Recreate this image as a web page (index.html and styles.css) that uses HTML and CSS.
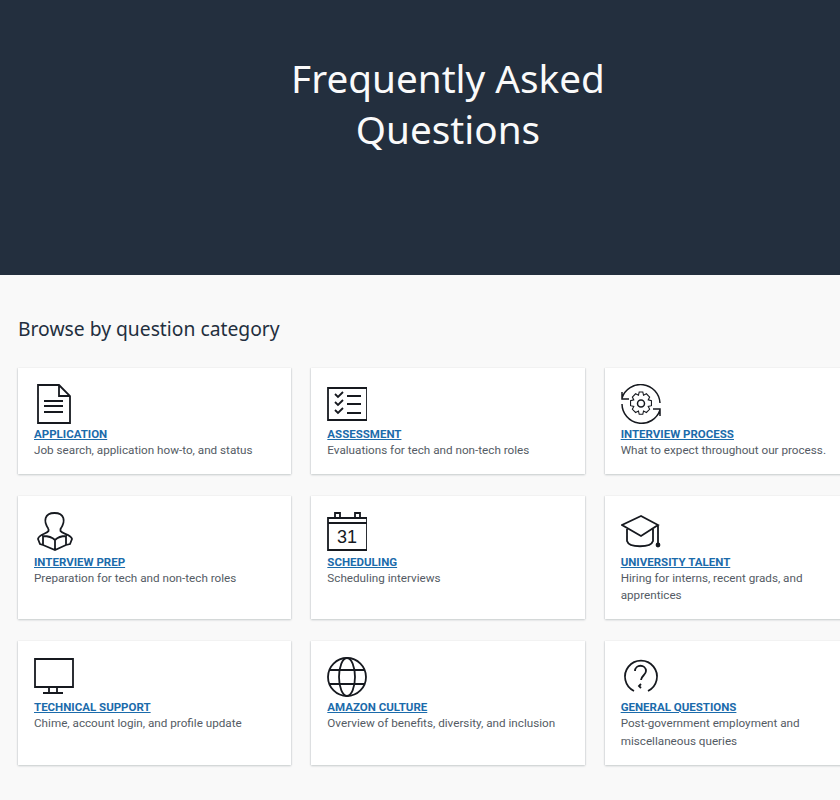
FILE: index.html
```html
<!DOCTYPE html>
<html lang="en">
<head>
<meta charset="utf-8">
<title>Frequently Asked Questions</title>
<link rel="stylesheet" href="styles.css">
</head>
<body>
<div class="page">
  <header class="hero"><h1>Frequently Asked<br>Questions</h1></header>
  <main class="content">
    <h2>Browse by question category</h2>
    <div class="grid">
      <section class="card">
        <svg class="icon" viewBox="0 0 40 40"><path d="M4 1h21l11 11v27H4z M25 1v11h11 M10 17h19 M10 22h19 M10 28h19"/></svg>
        <a href="#">APPLICATION</a>
        <p>Job search, application how-to, and status</p>
      </section>
      <section class="card">
        <svg class="icon" viewBox="0 0 40 40"><path d="M1 4h39v32H1z M8 10l3 3 5-5 M8 18l3 3 5-5 M8 26l3 3 5-5 M20 12h14 M20 20h14 M20 29h14"/></svg>
        <a href="#">ASSESSMENT</a>
        <p>Evaluations for tech and non-tech roles</p>
      </section>
      <section class="card">
        <svg class="icon thin" viewBox="0 0 40 40"><path d="M1 14A19.500 19.500 0 0 1 39 19 M39 26A19.500 19.500 0 0 1 1 20 M1 8l0 7 7 0 M39 32l0-7-7 0"/><path transform="translate(20 19.500) scale(.72) translate(-20 -20)" d="M17.500 4h5l1 4.500 4-2 4.500 4.500-2 4 4.500 1v7l-4.500 1 2 4-4.500 4.500-4-2-1 4.500h-5l-1-4.500-4 2-4.500-4.500 2-4-4.500-1v-7l4.500-1-2-4 4.500-4.500 4 2z"/><circle cx="20" cy="19.500" r="3.500"/></svg>
        <a href="#">INTERVIEW PROCESS</a>
        <p>What to expect throughout our process.</p>
      </section>
      <section class="card">
        <svg class="icon" viewBox="0 0 40 40"><path d="M14.500 17C9 9 10.500 1 20.500 1S32 9 26.500 17V19C28 22 37 22 38 27L36 32 32 33 M14.500 17V19C13 22 5 22 4 27L6 32 9 33 M21 28C18 25 14 24 9 24V33L21 38 32 33V24C28 24 24 25 21 28z M21 28V38"/></svg>
        <a href="#">INTERVIEW PREP</a>
        <p>Preparation for tech and non-tech roles</p>
      </section>
      <section class="card">
        <svg class="icon" viewBox="0 0 40 40"><path d="M1 6h39v32H1z M1 11h39 M8 6V1h5v5 M28 6V1h5v5"/><text x="20" y="31" class="date">31</text></svg>
        <a href="#">SCHEDULING</a>
        <p>Scheduling interviews</p>
      </section>
      <section class="card">
        <svg class="icon" viewBox="0 0 40 40"><path d="M20 4L1 13l19 11 17-11z M6 17v12c2 7 24 7 26 0V17 M37 13v20"/><circle class="dot" cx="37" cy="33" r="1.500"/></svg>
        <a href="#">UNIVERSITY TALENT</a>
        <p>Hiring for interns, recent grads, and apprentices</p>
      </section>
      <section class="card">
        <svg class="icon" viewBox="0 0 40 40"><path d="M1 2h38v28H1z M15 30v6 M23 30v6 M9 36h20"/></svg>
        <a href="#">TECHNICAL SUPPORT</a>
        <p>Chime, account login, and profile update</p>
      </section>
      <section class="card">
        <svg class="icon" viewBox="0 0 40 40"><circle cx="20" cy="20" r="19"/><ellipse cx="20" cy="20" rx="8" ry="19"/><path d="M3 13h34 M3 27h34"/></svg>
        <a href="#">AMAZON CULTURE</a>
        <p>Overview of benefits, diversity, and inclusion</p>
      </section>
      <section class="card">
        <svg class="icon" viewBox="0 0 40 40"><path d="M13 34A16 16 0 1 1 27 34"/><path d="M14 14c0-7 11-7 11 0 0 4-5 5-5 9 M20 27l-2 2 2 2"/></svg>
        <a href="#">GENERAL QUESTIONS</a>
        <p>Post-government employment and miscellaneous queries</p>
      </section>
    </div>
  </main>
</div>
</body>
</html>
```
FILE: styles.css
```css
html, body {
  margin: 0;
  padding: 0;
  overflow: hidden;
  height: 800px;
  background: #f9f9f9;
}
body {
  font-family: Roboto, "Noto Sans", sans-serif;
}
.page {
  width: 896px;
}
.hero {
  height: 275px;
  background: #232f3e;
  box-sizing: border-box;
  padding-top: 53px;
}
h1 {
  margin: 0;
  font-family: "Noto Sans", sans-serif;
  font-size: 38.7px;
  line-height: 51px;
  font-weight: 400;
  color: #fafafa;
  text-align: center;
}
.content {
  padding: 41px 18px 0;
}
h2 {
  margin: 0 0 26px;
  font-family: "Noto Sans", sans-serif;
  font-size: 19.3px;
  line-height: 26px;
  font-weight: 400;
  color: #232f3e;
}
.grid {
  display: grid;
  grid-template-columns: repeat(3, 1fr);
  column-gap: 20px;
  row-gap: 22px;
}
.card {
  background: #fff;
  box-sizing: border-box;
  padding: 16px 16px 14.75px;
  box-shadow: 0 1px 2px 0 rgba(0, 28, 36, .2), 1px 0 1px 0 rgba(0, 28, 36, .05), -1px 0 1px 0 rgba(0, 28, 36, .05);
}
.icon {
  display: block;
  width: 40px;
  height: 40px;
  fill: none;
  stroke: #16191f;
  stroke-width: 1.8;
}
.thin {
  stroke-width: 1.5;
}
.date {
  fill: #16191f;
  stroke: none;
  font-family: "Liberation Sans", sans-serif;
  font-size: 18px;
  text-anchor: middle;
}
.dot {
  fill: #16191f;
}
.card a {
  display: block;
  margin-top: 1.5px;
  width: max-content;
  font-size: 11.5px;
  line-height: 16px;
  font-weight: 700;
  color: #1b6bab;
  text-decoration: underline;
}
.card p {
  margin: 0;
  padding-top: 0.5px;
  font-size: 11.7px;
  line-height: 17.25px;
  color: #545b64;
}
```
